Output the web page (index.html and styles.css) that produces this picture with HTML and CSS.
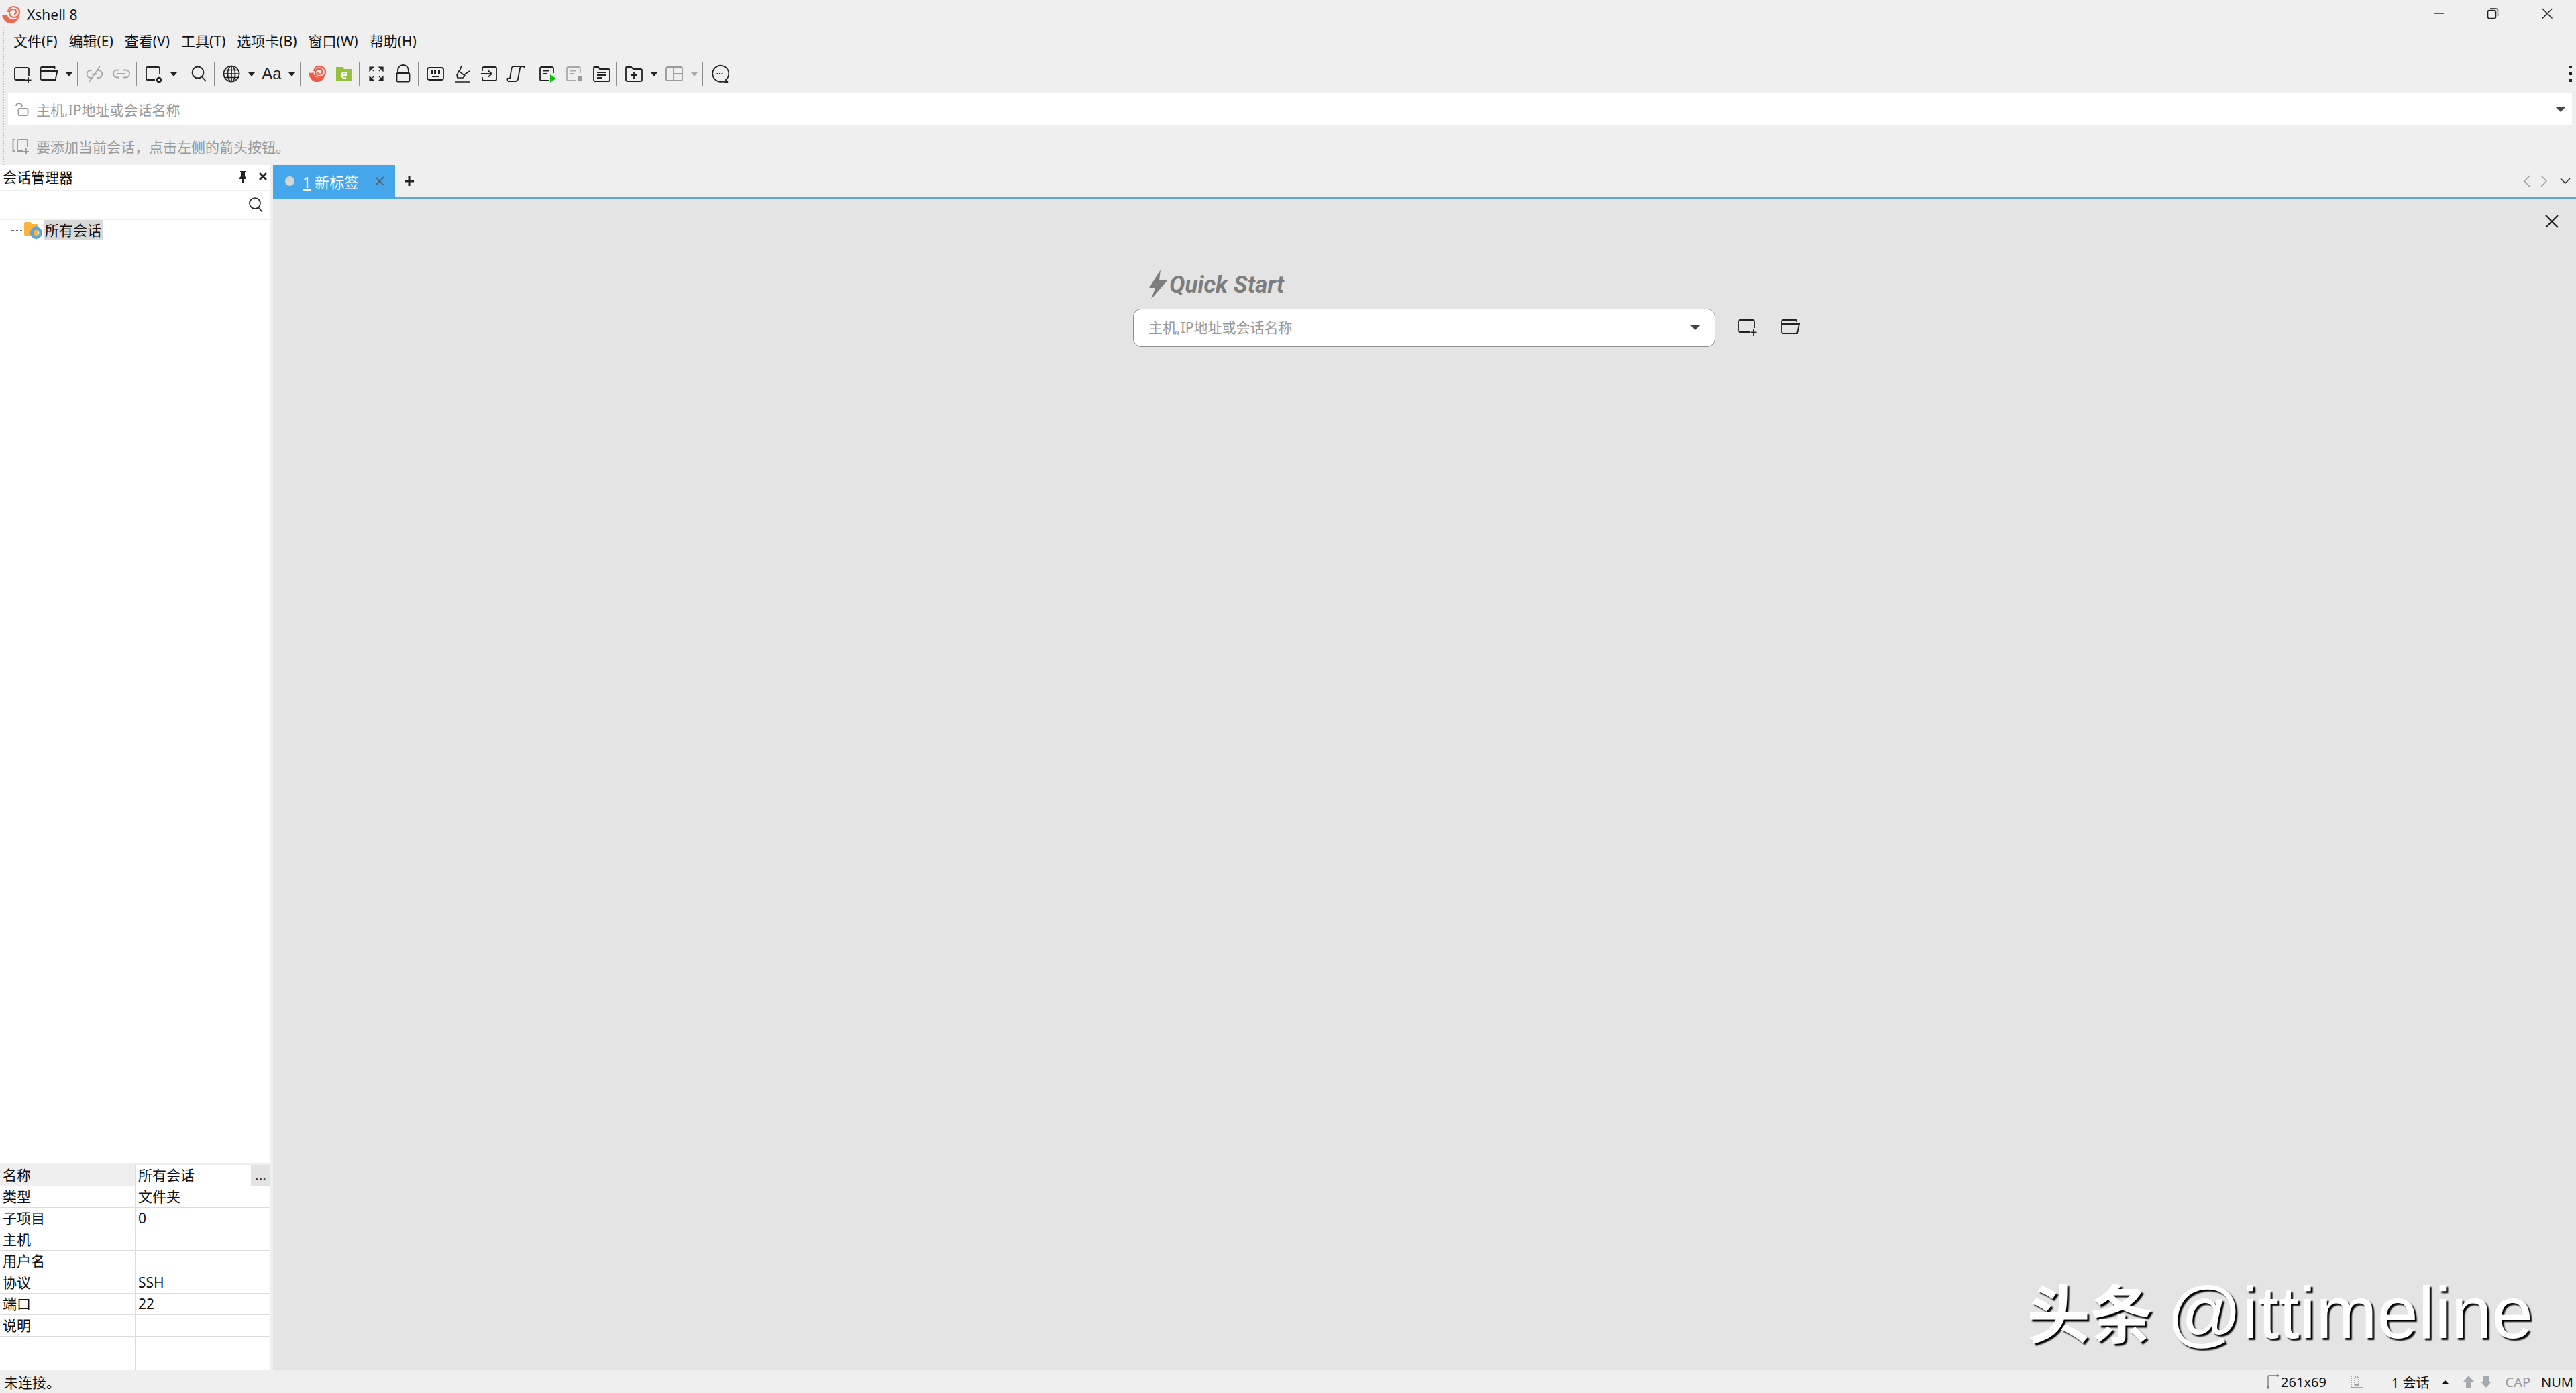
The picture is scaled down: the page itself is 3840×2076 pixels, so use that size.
FILE: index.html
```html
<!doctype html>
<html lang="zh-CN">
  <head>
    <meta charset="UTF-8" />
    <title>Xshell 8</title>
    <link rel="stylesheet" href="styles.css">
  </head>
  <body>
    <div class="app">
      <header class="titlebar">
        <svg class="app-logo" width="30" height="28" viewBox="0 0 30 28">
          <path d="M1 14c3 1 6 1 8-1 0 5 3 8 8 8 6 0 10-5 10-10 1 9-5 16-13 16C7 27 2 21 1 14z" fill="#ee6a52"/>
          <path d="M10 10c0-5 4-8 8-8s9 3 9 8-4 8-8 8-7-3-7-7 3-5 6-5 4 2 4 4-1 3-3 3" fill="none" stroke="#ee6a52" stroke-width="2.200"/>
        </svg>
        <span class="app-title">Xshell 8</span>
        <div class="window-btns">
          <svg width="18" height="18" viewBox="0 0 18 18"><path d="M2 9h15" stroke="#222" stroke-width="1.4"/></svg>
          <svg width="18" height="18" viewBox="0 0 18 18"><rect x="1.500" y="4.500" width="12" height="12" rx="2.500" fill="none" stroke="#222" stroke-width="1.600"/><path d="M5 2h8.500a3 3 0 0 1 3 3v8" fill="none" stroke="#222" stroke-width="1.400"/></svg>
          <svg width="18" height="18" viewBox="0 0 18 18"><path d="M2 2l14.500 14.500M16.500 2L2 16.500" stroke="#222" stroke-width="1.500"/></svg>
        </div>
      </header>

      <div class="bars">
        <nav class="menubar">
          <span class="menu-item">文件(F)</span>
          <span class="menu-item">编辑(E)</span>
          <span class="menu-item">查看(V)</span>
          <span class="menu-item">工具(T)</span>
          <span class="menu-item">选项卡(B)</span>
          <span class="menu-item">窗口(W)</span>
          <span class="menu-item">帮助(H)</span>
        </nav>

        <div class="toolbar">
          <span class="tool"><svg width="28" height="28" viewBox="0 0 28 28"><path d="M24 17V7a2 2 0 0 0-2-2H5a2 2 0 0 0-2 2v14a2 2 0 0 0 2 2h13M23 19v9M18.500 23.500h9" fill="none" stroke="#222" stroke-width="1.800"/></svg></span>
          <span class="tool"><svg width="28" height="28" viewBox="0 0 28 28"><path d="M1.500 10V6a2 2 0 0 1 2-2h19v3M1.500 10h25l-3 13H3.500a2 2 0 0 1-2-2z" fill="none" stroke="#222" stroke-width="1.800"/></svg></span>
          <span class="drop"></span>
          <span class="sep"></span>
          <span class="tool"><svg width="28" height="28" viewBox="0 0 28 28"><g fill="none" stroke="#a8a8a8" stroke-width="1.800"><path d="M10 9H8a5.500 5.500 0 0 0 0 11h3M18 9h2a5.500 5.500 0 0 1 0 11h-3M10 14.500h8M22 3L6 26"/></g></svg></span>
          <span class="tool"><svg width="28" height="28" viewBox="0 0 28 28"><g fill="none" stroke="#a8a8a8" stroke-width="1.800"><path d="M11 8.500H7.500a5.500 5.500 0 0 0 0 11H11M17 8.500h3.500a5.500 5.500 0 0 1 0 11H17M8 14h12"/></g></svg></span>
          <span class="sep"></span>
          <span class="tool"><svg width="28" height="28" viewBox="0 0 28 28"><path d="M23 15V6a2 2 0 0 0-2-2H5a2 2 0 0 0-2 2v15a2 2 0 0 0 2 2h11" fill="none" stroke="#222" stroke-width="1.800"/><circle cx="22" cy="23" r="3" fill="none" stroke="#222" stroke-width="2.600"/></svg></span>
          <span class="drop"></span>
          <span class="sep"></span>
          <span class="tool"><svg width="28" height="28" viewBox="0 0 28 28"><circle cx="12" cy="12" r="8.500" fill="none" stroke="#222" stroke-width="1.800"/><path d="M18 18.500l6 6.500" stroke="#222" stroke-width="1.800"/></svg></span>
          <span class="sep"></span>
          <span class="tool"><svg width="28" height="28" viewBox="0 0 28 28"><g fill="none" stroke="#222" stroke-width="1.700"><circle cx="14" cy="14" r="11.500"/><ellipse cx="14" cy="14" rx="5.500" ry="11.500"/><path d="M14 2.500v23M2.500 14h23M4 8.500h20M4 19.500h20"/></g></svg></span>
          <span class="drop"></span>
          <span class="tool tool-text">Aa</span>
          <span class="drop"></span>
          <span class="sep"></span>
          <span class="tool"><svg width="28" height="26" viewBox="0 0 30 28">
            <path d="M1 12c3 1 6 1 8-1 0 5 3 9 8 9 6 0 9-4 10-8 1 9-5 15-13 15C7 27 2 20 1 12z" fill="#ee5a45"/>
            <path d="M10 10c0-5 4-8 8-8s10 3 10 9-4 8-9 8-7-3-7-7 2-6 6-6 5 2 5 5-2 4-4 4-3-1-3-3" fill="none" stroke="#ee5a45" stroke-width="2.400"/>
          </svg></span>
          <span class="tool"><svg width="26" height="24" viewBox="0 0 26 24"><path d="M1 2h10l2 3h12v18H1z" fill="#95c23d"/><path d="M9 14h8M9.500 13a4 4 0 0 1 7.500-1M16 17.500a4.500 4.500 0 0 1-6.500-1.500" fill="none" stroke="#fff" stroke-width="1.800"/></svg></span>
          <span class="sep"></span>
          <span class="tool"><svg width="24" height="24" viewBox="0 0 24 24"><path d="M2 8V2h6zM22 8V2h-6zM2 16v6h6zM22 16v6h-6zM4 4l4 4M20 4l-4 4M4 20l4-4M20 20l-4-4" fill="#222" stroke="#222" stroke-width="1.200"/></svg></span>
          <span class="tool"><svg width="24" height="28" viewBox="0 0 24 28"><path d="M4 13V9a8 8 0 0 1 16 0v2M4 13h16a1.500 1.500 0 0 1 1.500 1.500v9.500a1.500 1.500 0 0 1-1.500 1.500H4A1.500 1.500 0 0 1 2.500 24v-9.500A1.500 1.500 0 0 1 4 13z" fill="none" stroke="#222" stroke-width="1.800"/></svg></span>
          <span class="sep"></span>
          <span class="tool"><svg width="28" height="24" viewBox="0 0 28 24"><rect x="2" y="3" width="24" height="18" rx="3" fill="none" stroke="#222" stroke-width="1.800"/><path d="M7 8h3M12 8h3M18 8h3M7 11h3M12 11h3M18 11h3M9 16h10" stroke="#222" stroke-width="1.800"/></svg></span>
          <span class="tool"><svg width="28" height="28" viewBox="0 0 28 28"><path d="M3 26h22M9 10l9 7-3 3H7l-1-4zM10 10l3-8M16 16l9-6" fill="none" stroke="#222" stroke-width="1.700"/></svg></span>
          <span class="tool"><svg width="26" height="26" viewBox="0 0 26 26"><path d="M3 9V5a2 2 0 0 1 2-2h17a2 2 0 0 1 2 2v16a2 2 0 0 1-2 2H5a2 2 0 0 1-2-2v-3M1 13h15M12 8.500l5 4.500-5 4.500" fill="none" stroke="#222" stroke-width="1.800"/></svg></span>
          <span class="tool"><svg width="28" height="28" viewBox="0 0 28 28"><path d="M3 25h10a4 4 0 0 0 4-3L20 6c.4-2 2-3 4-3H11C9 3 8 4 7.500 6L5 21H1.500c-.5 2 .5 4 1.500 4zM24 3c2 0 3 1 3 3" fill="none" stroke="#222" stroke-width="1.800"/></svg></span>
          <span class="sep"></span>
          <span class="tool"><svg width="28" height="28" viewBox="0 0 28 28"><path d="M22 13V6a2 2 0 0 0-2-2H4a2 2 0 0 0-2 2v16a2 2 0 0 0 2 2h11M7 9.500h9M7 14h5" fill="none" stroke="#222" stroke-width="1.800"/><path d="M17 15l9 6-9 6z" fill="#0fc00f"/></svg></span>
          <span class="tool"><svg width="28" height="28" viewBox="0 0 28 28"><path d="M22 13V6a2 2 0 0 0-2-2H4a2 2 0 0 0-2 2v16a2 2 0 0 0 2 2h11M7 9.500h9M7 14h5" fill="none" stroke="#aaa" stroke-width="1.800"/><rect x="18" y="18" width="7" height="7" fill="#999"/></svg></span>
          <span class="tool"><svg width="28" height="26" viewBox="0 0 28 26"><path d="M2 4a1 1 0 0 1 1-1h6l2 3h13a2 2 0 0 1 2 2v14a2 2 0 0 1-2 2H4a2 2 0 0 1-2-2zM7 11h13M7 15h13M7 19h8" fill="none" stroke="#222" stroke-width="1.800"/></svg></span>
          <span class="sep"></span>
          <span class="tool"><svg width="28" height="26" viewBox="0 0 28 26"><path d="M2 4a1 1 0 0 1 1-1h7l3 3h11a2 2 0 0 1 2 2v14a2 2 0 0 1-2 2H4a2 2 0 0 1-2-2zM14 10v10M9 15h10" fill="none" stroke="#222" stroke-width="1.800"/></svg></span>
          <span class="drop"></span>
          <span class="tool"><svg width="28" height="24" viewBox="0 0 28 24"><path d="M4 2h20a2 2 0 0 1 2 2v16a2 2 0 0 1-2 2H4a2 2 0 0 1-2-2V4a2 2 0 0 1 2-2zM13 2v20M13 12h13" fill="none" stroke="#9a9a9a" stroke-width="1.800"/></svg></span>
          <span class="drop drop-off"></span>
          <span class="sep"></span>
          <span class="tool"><svg width="28" height="28" viewBox="0 0 28 28"><path d="M23 23a12 12 0 1 0-5 2.500c2 .3 5 .8 8 .8-2-1-3-2-3-3.300z" fill="none" stroke="#222" stroke-width="1.800"/><path d="M9.500 14h2M13 14h2M16.500 14h2" stroke="#222" stroke-width="1.800"/></svg></span>
          <span class="kebab"><i></i><i></i><i></i></span>
        </div>

        <div class="addressbar">
          <svg width="22" height="24" viewBox="0 0 22 24"><path d="M2 7a4.500 4.500 0 0 1 8.500-1.500L11 8M7 11h11a1.500 1.500 0 0 1 1.500 1.500v7A1.500 1.500 0 0 1 18 21H7a1.500 1.500 0 0 1-1.500-1.500v-7A1.500 1.500 0 0 1 7 11z" fill="none" stroke="#999" stroke-width="1.800"/></svg>
          <span class="address-text">主机,IP地址或会话名称</span>
          <span class="caret"></span>
        </div>

        <div class="hintbar">
          <svg width="26" height="24" viewBox="0 0 26 24"><path d="M4 2H1.500v17H4M8 19V4a2 2 0 0 1 2-2h11a2 2 0 0 1 2 2v9M8 19h9M21 15v9M17 20h8" fill="none" stroke="#999" stroke-width="1.800"/></svg>
          <span class="hint-text">要添加当前会话，点击左侧的箭头按钮。</span>
        </div>
      </div>

      <div class="main">
        <aside class="sidebar">
          <div class="side-head">
            <span class="side-title">会话管理器</span>
            <svg class="side-pin" width="16" height="18" viewBox="0 0 16 18"><path d="M4 1h8v2h-1v6l2 2v2H9v5H7v-5H3v-2l2-2V3H4z" fill="#222"/></svg>
            <svg class="side-close" width="14" height="14" viewBox="0 0 14 14"><path d="M2 2l10 10M12 2L2 12" stroke="#222" stroke-width="2.600"/></svg>
          </div>
          <div class="side-search">
            <svg width="24" height="26" viewBox="0 0 24 26"><circle cx="11" cy="11" r="8" fill="none" stroke="#222" stroke-width="1.700"/><path d="M16 17l6 7" stroke="#222" stroke-width="1.700"/></svg>
          </div>
          <div class="tree">
            <div class="tree-item">
              <span class="tree-dots"></span>
              <svg width="28" height="26" viewBox="0 0 28 26">
                <path d="M1 3a2 2 0 0 1 2-2h7l3 3h7a2 2 0 0 1 2 2v15H3a2 2 0 0 1-2-2z" fill="#fcb33c"/>
                <circle cx="19" cy="17" r="6.500" fill="none" stroke="#5fa6d6" stroke-width="4.500"/>
                <path d="M19 7v3M19 24v3M10 17h2M26 17h2" stroke="#5fa6d6" stroke-width="3"/>
              </svg>
              <span class="tree-label">所有会话</span>
            </div>
          </div>
          <div class="props">
            <div class="prop-row prop-first"><span class="prop-key">名称</span><span class="prop-val">所有会话</span><span class="prop-more">...</span></div>
            <div class="prop-row"><span class="prop-key">类型</span><span class="prop-val">文件夹</span></div>
            <div class="prop-row"><span class="prop-key">子项目</span><span class="prop-val">0</span></div>
            <div class="prop-row"><span class="prop-key">主机</span><span class="prop-val"></span></div>
            <div class="prop-row"><span class="prop-key">用户名</span><span class="prop-val"></span></div>
            <div class="prop-row"><span class="prop-key">协议</span><span class="prop-val">SSH</span></div>
            <div class="prop-row"><span class="prop-key">端口</span><span class="prop-val">22</span></div>
            <div class="prop-row"><span class="prop-key">说明</span><span class="prop-val"></span></div>
            <div class="prop-row prop-fill"><span class="prop-key"></span><span class="prop-val"></span></div>
          </div>
        </aside>

        <section class="workspace">
          <div class="tabstrip">
            <div class="tab">
              <span class="tab-dot"></span>
              <span class="tab-label"><u>1</u> 新标签</span>
              <svg width="14" height="14" viewBox="0 0 14 14"><path d="M1 1l12 12M13 1L1 13" stroke="#4a5a68" stroke-width="1.600"/></svg>
            </div>
            <svg class="tab-add" width="16" height="16" viewBox="0 0 16 16"><path d="M8 1v14M1 8h14" stroke="#222" stroke-width="3"/></svg>
            <div class="tab-nav">
              <svg width="12" height="18" viewBox="0 0 12 18"><path d="M10 1L2 9l8 8" fill="none" stroke="#999" stroke-width="1.500"/></svg>
              <svg class="tab-next" width="12" height="18" viewBox="0 0 12 18"><path d="M2 1l8 8-8 8" fill="none" stroke="#999" stroke-width="1.500"/></svg>
              <svg width="16" height="10" viewBox="0 0 16 10"><path d="M1 1l7 7 7-7" fill="none" stroke="#222" stroke-width="1.500"/></svg>
            </div>
          </div>
          <div class="content">
            <svg class="content-close" width="20" height="20" viewBox="0 0 20 20"><path d="M1 1l18 18M19 1L1 19" stroke="#222" stroke-width="2.200"/></svg>
            <div class="quick-head">
              <svg width="28" height="44" viewBox="0 0 28 44"><path d="M18 0L1 27h9L4 44l24-28H16z" fill="#7d7d7d"/></svg>
              <span class="quick-title">Quick Start</span>
            </div>
            <div class="quick-row">
              <div class="quick-input">
                <span class="quick-text">主机,IP地址或会话名称</span>
                <span class="caret"></span>
              </div>
              <svg class="quick-new" width="30" height="28" viewBox="0 0 30 28"><path d="M26 16V6a2 2 0 0 0-2-2H5a2 2 0 0 0-2 2v14a2 2 0 0 0 2 2h15M25 18v9M20.500 22.500h9" fill="none" stroke="#222" stroke-width="1.800"/></svg>
              <svg class="quick-open" width="30" height="24" viewBox="0 0 30 24"><path d="M2 8V4a2 2 0 0 1 2-2h20v3M2 8h26l-3 14H4a2 2 0 0 1-2-2z" fill="none" stroke="#222" stroke-width="1.800"/></svg>
            </div>
            <div class="watermark"><span class="wm-cjk">头条</span> @ittimeline</div>
          </div>
        </section>
      </div>

      <footer class="statusbar">
        <span class="status-msg">未连接。</span>
        <svg class="st-size" width="20" height="24" viewBox="0 0 20 24"><path d="M3 3v18M3 3h16M1 18l2 4 2-4M16 1l3 2-3 2" fill="none" stroke="#777" stroke-width="1.300"/></svg>
        <span class="st-dims">261x69</span>
        <svg class="st-cursor" width="20" height="20" viewBox="0 0 20 20"><path d="M2 1v18M7 3h6v12H7zM2 19h18" fill="none" stroke="#888" stroke-width="1.300" stroke-dasharray="2 1"/></svg>
        <span class="st-sessions">1 会话</span>
        <span class="st-up"></span>
        <svg class="st-arrow" width="18" height="20" viewBox="0 0 18 20"><path d="M9 1l8 9h-4v9H5v-9H1z" fill="#a3abaf"/></svg>
        <svg class="st-arrow2" width="18" height="20" viewBox="0 0 18 20"><path d="M9 19l8-9h-4V1H5v9H1z" fill="#a3abaf"/></svg>
        <span class="st-cap">CAP</span>
        <span class="st-num">NUM</span>
      </footer>
    </div>
  </body>
</html>
```

FILE: styles.css
```css
* {
  box-sizing: border-box;
}

html,
body {
  margin: 0;
  height: 100%;
}

body {
  font-family: "Noto Sans", "Noto Sans CJK SC", sans-serif;
  font-size: 21px;
  color: #111;
  background-color: #efefef;
  overflow: hidden;
}

.app {
  display: flex;
  flex-direction: column;
  height: 2076px;
}

.titlebar {
  display: flex;
  align-items: center;
  height: 40px;
  padding: 0 34px 0 2px;
  flex: none;
}

.app-logo {
  margin-top: 3px;
}

.app-title {
  margin-left: 8px;
  margin-top: 3px;
}

.window-btns {
  margin-left: auto;
  display: flex;
  gap: 63px;
  align-items: center;
}

.bars {
  height: 206px;
  flex: none;
  margin-left: 4px;
  border-left: 2px dotted #bdbdbd;
}

.menubar {
  display: flex;
  align-items: center;
  height: 40px;
  padding-left: 14px;
}

.menu-item {
  margin-right: 17px;
  white-space: nowrap;
}

.toolbar {
  display: flex;
  align-items: center;
  height: 44px;
  margin-top: 8px;
  padding-left: 7px;
  padding-right: 6px;
}

.tool {
  width: 40px;
  height: 36px;
  display: flex;
  align-items: center;
  justify-content: center;
  flex: none;
}

.tool-text {
  font-family: "Liberation Sans", sans-serif;
  font-size: 24px;
  color: #222;
}

.drop {
  width: 20px;
  height: 36px;
  position: relative;
  flex: none;
}

.drop::after {
  content: "";
  position: absolute;
  left: 5px;
  top: 16px;
  border-left: 5px solid transparent;
  border-right: 5px solid transparent;
  border-top: 6px solid #222;
}

.drop-off::after {
  border-top-color: #aaa;
}

.sep {
  width: 1px;
  height: 36px;
  margin-left: 2px;
  margin-right: 5px;
  background-color: #8e8e8e;
  flex: none;
}

.kebab {
  margin-left: auto;
  display: flex;
  flex-direction: column;
  gap: 6px;
}

.kebab i {
  display: block;
  width: 4px;
  height: 4px;
  background-color: #222;
}

.addressbar {
  display: flex;
  align-items: center;
  height: 48px;
  margin: 7px 6px 0 6px;
  padding: 0 10px 0 10px;
  background-color: #fff;
}

.address-text {
  margin-left: 10px;
  color: #999;
}

.caret {
  margin-left: auto;
  border-left: 7px solid transparent;
  border-right: 7px solid transparent;
  border-top: 7px solid #444;
}

.hintbar {
  display: flex;
  align-items: center;
  height: 58px;
  padding-left: 12px;
  margin-top: 2px;
}

.hint-text {
  margin-left: 10px;
  color: #999;
}

.main {
  display: flex;
  height: 1796px;
  flex: none;
}

.sidebar {
  width: 403px;
  flex: none;
  display: flex;
  flex-direction: column;
  background-color: #fff;
}

.side-head {
  display: flex;
  align-items: center;
  height: 38px;
  padding-left: 4px;
  padding-bottom: 3px;
  border-bottom: 1px solid #eee;
  flex: none;
}

.side-pin {
  margin-left: auto;
  margin-right: -5px;
}

.side-close {
  margin-left: 20px;
  margin-right: 4px;
}

.side-search {
  display: flex;
  align-items: center;
  justify-content: flex-end;
  height: 44px;
  padding-right: 10px;
  border-bottom: 2px solid #eee;
  flex: none;
}

.tree {
  flex: 1;
}

.tree-item {
  display: flex;
  align-items: center;
  height: 30px;
}

.tree-dots {
  width: 18px;
  margin-left: 17px;
  border-top: 1px dotted #666;
}

.tree-label {
  height: 30px;
  line-height: 30px;
  padding: 0 2px;
  margin-left: 2px;
  background-color: #d9d9d9;
}

.props {
  flex: none;
  height: 309px;
  border-top: 3px solid #eee;
  display: flex;
  flex-direction: column;
}

.prop-row {
  display: flex;
  height: 32px;
  line-height: 30px;
  border-bottom: 1px solid #dcdcdc;
  flex: none;
}

.prop-fill {
  flex: 1;
  border-bottom: none;
}

.prop-key {
  width: 202px;
  padding-left: 4px;
  border-right: 1px solid #dcdcdc;
  flex: none;
}

.prop-val {
  flex: 1;
  padding-left: 4px;
}

.prop-first .prop-key {
  background-color: #efefef;
}

.prop-more {
  width: 29px;
  text-align: center;
  color: #333;
  background-color: #e3e3e3;
}

.workspace {
  flex: 1;
  margin-left: 4px;
  display: flex;
  flex-direction: column;
  min-width: 0;
}

.tabstrip {
  display: flex;
  align-items: center;
  height: 51px;
  border-bottom: 3px solid #5fa5d5;
  flex: none;
}

.tab {
  display: flex;
  align-items: center;
  width: 182px;
  height: 51px;
  margin-bottom: -3px;
  padding-left: 18px;
  padding-bottom: 3px;
  color: #fff;
  background-color: #46a6eb;
}

.tab-dot {
  width: 14px;
  height: 14px;
  border-radius: 50%;
  background-color: #d6d6d6;
}

.tab-label {
  margin-left: 12px;
  margin-right: 24px;
  font-size: 22px;
}

.tab-add {
  margin-left: 13px;
}

.tab-nav {
  margin-left: auto;
  margin-right: 8px;
  display: flex;
  align-items: center;
  gap: 13px;
}

.tab-next {
  margin-right: 5px;
}

.content {
  flex: 1;
  position: relative;
  padding: 105px 0 0 1282px;
  background-color: #e4e4e4;
}

.content-close {
  position: absolute;
  top: 23px;
  right: 26px;
}

.quick-head {
  display: flex;
  align-items: center;
  height: 44px;
  padding-left: 23px;
}

.quick-title {
  margin-left: 3px;
  font-family: "Roboto", sans-serif;
  font-size: 35px;
  font-weight: 700;
  font-style: italic;
  color: #7d7d7d;
}

.quick-row {
  display: flex;
  align-items: center;
  margin-top: 14px;
}

.quick-input {
  display: flex;
  align-items: center;
  width: 868px;
  height: 57px;
  padding: 0 22px 0 22px;
  background-color: #fff;
  border: 1px solid #8c8c8c;
  border-radius: 12px;
}

.quick-text {
  color: #999;
  margin-top: -3px;
}

.quick-new {
  margin-left: 32px;
  margin-top: -4px;
}

.quick-open {
  margin-left: 35px;
  margin-top: -4px;
}

.watermark {
  position: absolute;
  right: 64px;
  bottom: 26px;
  font-family: "Liberation Sans", sans-serif;
  font-size: 110px;
  line-height: 1.08;
  color: #fff;
  white-space: nowrap;
  text-shadow: 3px 3px 2px #000;
}

.wm-cjk {
  font-family: "Noto Sans CJK SC", sans-serif;
  font-size: 94px;
  font-weight: 700;
  margin-right: -10px;
}

.statusbar {
  display: flex;
  align-items: center;
  height: 34px;
  flex: none;
  padding-left: 6px;
  font-size: 20px;
}

.status-msg {
  font-size: 21px;
}

.st-size {
  margin-left: auto;
}

.st-dims {
  margin-left: 2px;
}

.st-cursor {
  margin-left: 35px;
}

.st-sessions {
  margin-left: 42px;
}

.st-up {
  margin-left: 18px;
  border-left: 5px solid transparent;
  border-right: 5px solid transparent;
  border-bottom: 5px solid #111;
}

.st-arrow {
  margin-left: 21px;
}

.st-arrow2 {
  margin-left: 8px;
}

.st-cap {
  margin-left: 20px;
  color: #999;
}

.st-num {
  margin-left: 16px;
  margin-right: 4px;
}
```
